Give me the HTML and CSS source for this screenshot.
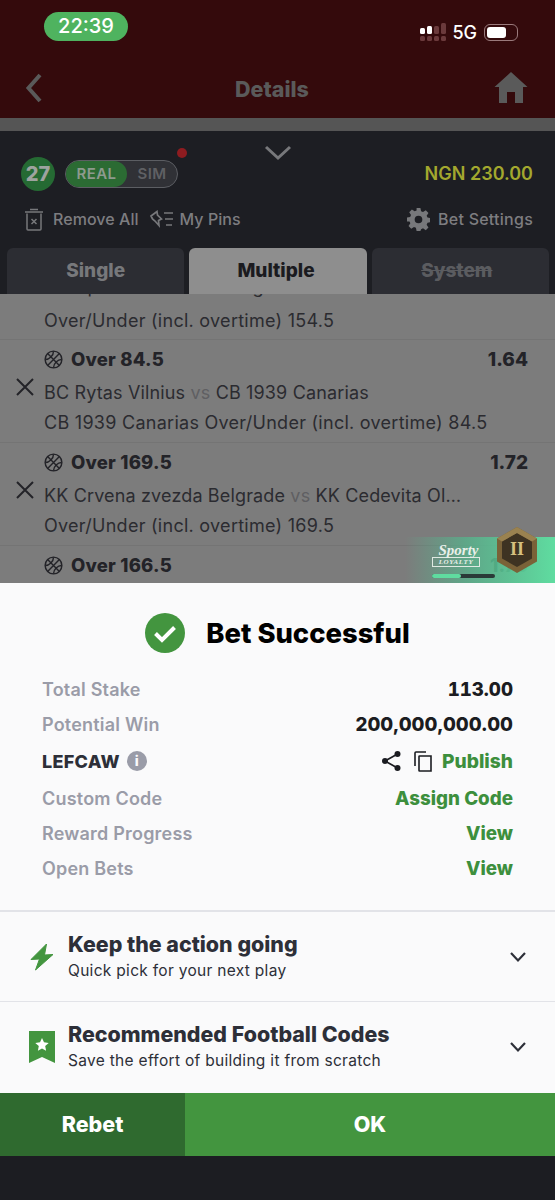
FILE: index.html
```html
<!DOCTYPE html>
<html lang="en">
<head>
<meta charset="utf-8">
<title>Bet Successful</title>
<link rel="stylesheet" href="styles.css">
</head>
<body>
<div class="app">
  <header class="top">
    <div class="status">
      <div class="time">22:39</div>
      <div class="status-right">
        <svg class="signal" width="27" height="20" viewBox="0 0 27 20">
          <g fill="#6b3a3c"><rect x="0" y="14" width="5" height="5" rx="1.5"/><rect x="7" y="14" width="5" height="5" rx="1.5"/><rect x="14" y="14" width="5" height="5" rx="1.5"/><rect x="21" y="14" width="5" height="5" rx="1.5"/><rect x="14" y="4" width="5" height="8" rx="1.5"/><rect x="21" y="1" width="5" height="11" rx="1.5"/></g>
          <g fill="#fff"><rect x="0" y="6" width="5" height="6" rx="1.5"/><rect x="7" y="4" width="5" height="8" rx="1.5"/></g>
        </svg>
        <span class="net">5G</span>
        <div class="battery"><div class="battery-fill"></div></div>
      </div>
    </div>
    <div class="nav">
      <svg class="back" width="18" height="32" viewBox="0 0 18 32"><path d="M15 3 3.500 16 15 29" fill="none" stroke="#5a5a5a" stroke-width="4"/></svg>
      <div class="nav-title">Details</div>
      <svg class="home" width="34" height="32" viewBox="0 0 34 32"><path d="M17 0 33.500 15H29V31H21V20H13V31H5V15H.5z" fill="#5a5a5a"/></svg>
    </div>
  </header>
  <div class="strip"></div>

  <section class="panel">
    <div class="grip"><svg width="28" height="16" viewBox="0 0 28 16"><path d="M2 2 14 13 26 2" fill="none" stroke="#77787b" stroke-width="3"/></svg></div>
    <div class="acct">
      <div class="count">27</div>
      <div class="toggle"><span class="real">REAL</span><span class="sim">SIM</span><i class="dot"></i></div>
      <div class="balance">NGN 230.00</div>
    </div>
    <div class="tools">
      <svg class="ti" width="18" height="23" viewBox="0 0 18 23"><path d="M2 5.500V21a1 1 0 0 0 1 1h12a1 1 0 0 0 1-1V5.500M0 4h18M5 1.500h8M6.500 11l5 5M11.500 11l-5 5" fill="none" stroke="#77787b" stroke-width="1.500"/></svg>
      <span class="tool-label">Remove All</span>
      <svg class="pin" width="24" height="18" viewBox="0 0 24 18"><path d="M1 6 7 1.500l.5 3.500 4 4-3 1.500.5 5L5 11 2.500 9zM14 3h9M15 9h8M16 15h6" fill="none" stroke="#77787b" stroke-width="1.700"/></svg>
      <span class="tool-label">My Pins</span>
      <svg class="gear" width="23" height="23" viewBox="0 0 24 24"><path fill="#77787b" fill-rule="evenodd" d="M10 0h4l.7 3.300 2 .9L19.600 2.300l2.800 2.800-1.900 2.900.9 2 3.300.7v4l-3.300.7-.9 2 1.900 2.900-2.800 2.800-2.900-1.900-2 .9L14 24h-4l-.7-3.300-2-.9-2.900 1.900-2.800-2.800 1.900-2.900-.9-2L0 14v-4l3.300-.7.9-2L2.300 4.400l2.800-2.800L8 3.500l2-.9zM12 8a4 4 0 1 0 0 8 4 4 0 0 0 0-8z"/></svg>
      <span class="tool-label tool-wide">Bet Settings</span>
    </div>
    <div class="tabs">
      <div class="tab">Single</div>
      <div class="tab tab-on">Multiple</div>
      <div class="tab tab-off">System</div>
    </div>
  </section>

  <section class="list">
    <article class="bet bet-cut">
      <div class="x-col"></div>
      <div class="bet-body">
        <div class="teams teams-cut">Ratiopharm Ulm <span class="vs">vs</span> Bourg</div>
        <div class="market">Over/Under (incl. overtime) 154.5</div>
      </div>
    </article>
    <article class="bet">
      <svg class="x" width="20" height="20" viewBox="0 0 20 20"><path d="M2 2 18 18M18 2 2 18" stroke="#232328" stroke-width="2"/></svg>
      <div class="bet-body">
        <div class="pick">
          <svg class="ball" width="19" height="19" viewBox="0 0 20 20"><g fill="none" stroke="#232328" stroke-width="1.500"><circle cx="10" cy="10" r="8.800"/><path d="M3.800 3.800 16.200 16.200M16.200 3.800 3.800 16.200M1.500 10c4 0 8.500-4 8.500-8.800M18.500 10c-4 0-8.500 4-8.500 8.800"/></g></svg>
          <span class="pick-name">Over 84.5</span><span class="odds">1.64</span>
        </div>
        <div class="teams">BC Rytas Vilnius <span class="vs">vs</span> CB 1939 Canarias</div>
        <div class="market">CB 1939 Canarias Over/Under (incl. overtime) 84.5</div>
      </div>
    </article>
    <article class="bet">
      <svg class="x" width="20" height="20" viewBox="0 0 20 20"><path d="M2 2 18 18M18 2 2 18" stroke="#232328" stroke-width="2"/></svg>
      <div class="bet-body">
        <div class="pick">
          <svg class="ball" width="19" height="19" viewBox="0 0 20 20"><g fill="none" stroke="#232328" stroke-width="1.500"><circle cx="10" cy="10" r="8.800"/><path d="M3.800 3.800 16.200 16.200M16.200 3.800 3.800 16.200M1.500 10c4 0 8.500-4 8.500-8.800M18.500 10c-4 0-8.500 4-8.500 8.800"/></g></svg>
          <span class="pick-name">Over 169.5</span><span class="odds">1.72</span>
        </div>
        <div class="teams">KK Crvena zvezda Belgrade <span class="vs">vs</span> KK Cedevita Ol…</div>
        <div class="market">Over/Under (incl. overtime) 169.5</div>
      </div>
    </article>
    <article class="bet bet-last">
      <div class="x-col"></div>
      <div class="bet-body">
        <div class="pick">
          <svg class="ball" width="19" height="19" viewBox="0 0 20 20"><g fill="none" stroke="#232328" stroke-width="1.500"><circle cx="10" cy="10" r="8.800"/><path d="M3.800 3.800 16.200 16.200M16.200 3.800 3.800 16.200M1.500 10c4 0 8.500-4 8.500-8.800M18.500 10c-4 0-8.500 4-8.500 8.800"/></g></svg>
          <span class="pick-name">Over 166.5</span><span class="odds">1.75</span>
        </div>
      </div>
    </article>
    <aside class="loyalty">
      <div class="loyalty-brand">
        <div class="sporty">Sporty</div>
        <div class="loyal-word">LOYALTY</div>
        <div class="progress"><div class="progress-fill"></div></div>
      </div>
      <svg class="hex" width="42" height="46" viewBox="0 0 42 46">
        <path d="M21 0 41 11.500v23L21 46 1 34.500v-23z" fill="#7a6238"/>
        <path d="M21 6 36 14.500v17L21 40 6 31.500v-17z" fill="#3e3322"/>
        <path d="M21 0 41 11.500 36 14.500 21 6 6 14.500 1 11.500z" fill="#9a8250"/>
      </svg>
      <span class="hex-label">II</span>
    </aside>
  </section>

  <section class="sheet">
    <div class="head">
      <svg width="40" height="40" viewBox="0 0 40 40"><circle cx="20" cy="20" r="20" fill="#43953f"/><path d="M10.500 20.500 17 27 29.500 14.500" fill="none" stroke="#fff" stroke-width="4"/></svg>
      <h1 class="head-title">Bet Successful</h1>
    </div>
    <div class="stats">
      <div class="stat"><span class="k">Total Stake</span><span class="v v-tab">113.00</span></div>
      <div class="stat"><span class="k">Potential Win</span><span class="v">200,000,000.00</span></div>
      <div class="stat stat-code">
        <span class="code">LEFCAW</span>
        <span class="info">i</span>
        <span class="code-actions">
          <svg width="19" height="20" viewBox="0 0 19 20"><g fill="#1b1c21"><circle cx="15.500" cy="3" r="3"/><circle cx="3" cy="10" r="3"/><circle cx="15.500" cy="17" r="3"/></g><path d="M15.500 3 3 10 15.500 17" fill="none" stroke="#1b1c21" stroke-width="1.700"/></svg>
          <svg class="copy" width="18" height="21" viewBox="0 0 18 21"><path d="M12 1H2a1 1 0 0 0-1 1v13M5.500 5H17v15H5.500a.5.500 0 0 1-.5-.5V5.500a.5.500 0 0 1 .5-.5z" fill="none" stroke="#1b1c21" stroke-width="1.600"/></svg>
          <span class="link link-pub">Publish</span>
        </span>
      </div>
      <div class="stat stat-custom"><span class="k">Custom Code</span><span class="link">Assign Code</span></div>
      <div class="stat"><span class="k">Reward Progress</span><span class="link">View</span></div>
      <div class="stat"><span class="k">Open Bets</span><span class="link">View</span></div>
    </div>
    <div class="fold fold-first">
      <svg class="fold-icon" width="26" height="28" viewBox="0 0 26 28"><path d="M17.500 1 2 16.500l8.500-.5L6.500 27 24 11.500l-8.500.5z" fill="#43953f" stroke="#43953f" stroke-width="1" stroke-linejoin="round"/></svg>
      <div class="fold-text"><div class="fold-title">Keep the action going</div><div class="fold-sub">Quick pick for your next play</div></div>
      <svg class="chev" width="18" height="12" viewBox="0 0 18 12"><path d="M2 2 9 9.500 16 2" fill="none" stroke="#2d2f38" stroke-width="2.200"/></svg>
    </div>
    <div class="fold">
      <svg class="fold-icon" width="26" height="32" viewBox="0 0 26 32"><path d="M0 0H26V32L13 26 0 32z" fill="#43953f"/><path d="m13 7 2 4.300 4.700.6-3.500 3.200.9 4.700-4.100-2.300-4.100 2.300.9-4.700-3.500-3.200 4.700-.6z" fill="#fff"/></svg>
      <div class="fold-text"><div class="fold-title">Recommended Football Codes</div><div class="fold-sub">Save the effort of building it from scratch</div></div>
      <svg class="chev" width="18" height="12" viewBox="0 0 18 12"><path d="M2 2 9 9.500 16 2" fill="none" stroke="#2d2f38" stroke-width="2.200"/></svg>
    </div>
  </section>

  <div class="actions">
    <div class="btn btn-rebet">Rebet</div>
    <div class="btn btn-ok">OK</div>
  </div>
</div>
</body>
</html>
```

FILE: styles.css
```css
* { box-sizing: border-box; }
html, body { margin: 0; padding: 0; }
body { background: #1c1d22; font-family: Inter, "Liberation Sans", sans-serif; }
.app { width: 555px; height: 1200px; overflow: hidden; display: flex; flex-direction: column; background: #1c1d22; }

.top { height: 118px; background: #340a0c; flex: none; }
.status { height: 59px; padding: 12px 37px 0 44px; display: flex; justify-content: space-between; }
.time { width: 84px; height: 29px; border-radius: 15px; background: #4fb35f; color: #fff; font-size: 20px; font-weight: 500; line-height: 29px; text-align: center; }
.status-right { display: flex; align-items: center; height: 40px; }
.signal { margin-right: 6px; }
.net { color: #fff; font-size: 18px; font-weight: 500; margin-right: 7px; margin-left: -1px; }
.battery { width: 34px; height: 17px; border: 1px solid #9a7a7c; border-radius: 6px; padding: 2px; }
.battery-fill { width: 19px; height: 100%; background: #fff; border-radius: 3px; }

.nav { height: 59px; display: flex; align-items: center; justify-content: space-between; padding: 0 27px 0 25px; }
.nav-title { flex: 1; text-align: center; color: #5a5a5a; font-size: 21.5px; font-weight: 800; padding-left: 7px; }
.back { margin-top: -1px; }
.home { margin-top: -1px; }

.strip { height: 13px; background: #555; flex: none; }

.panel { height: 163px; flex: none; background: #1d1e23; display: flex; flex-direction: column; }
.grip { height: 26px; padding-top: 14px; text-align: center; line-height: 0; }
.acct { height: 33px; display: flex; align-items: center; padding: 0 22px 0 21px; }
.count { width: 34px; height: 34px; border-radius: 50%; background: #256a33; color: #9ea39f; font-size: 20px; font-weight: 800; line-height: 34px; text-align: center; }
.toggle { position: relative; width: 113px; height: 28px; margin-left: 10px; border: 1px solid #5c5e63; border-radius: 14px; background: #303136; display: flex; font-size: 15px; font-weight: 600; letter-spacing: .4px; line-height: 26px; }
.real { width: 61px; background: #2b6b33; color: #8e9a8e; border-radius: 13px; text-align: center; }
.sim { flex: 1; color: #5f6064; text-align: center; }
.dot { position: absolute; top: -13px; right: -10px; width: 10px; height: 10px; border-radius: 50%; background: #8e1c20; }
.balance { margin-left: auto; color: #a3a82e; font-size: 18px; font-weight: 600; }

.tools { height: 46px; margin-top: 6px; display: flex; align-items: center; padding: 0 22px 0 25px; color: #7d7d80; font-size: 16px; font-weight: 500; letter-spacing: .05px; }
.tool-label { white-space: nowrap; }
.tool-wide { letter-spacing: .25px; }
.ti { margin-right: 10px; }
.pin { margin-left: 11px; margin-right: 6px; }
.gear { margin-left: auto; margin-right: 8px; }

.tabs { display: flex; gap: 5px; padding: 0 6px 0 7px; height: 46px; margin-top: 6px; }
.tab { flex: 1 1 0; background: #2c2d33; border-radius: 6px 6px 0 0; color: #77787b; font-size: 19px; font-weight: 800; line-height: 46px; text-align: center; }
.tab-on { background: #8e8e8e; color: #1b1b1f; text-indent: -4px; }
.tab-off { color: #5b5c60; text-decoration: line-through; text-indent: -7px; }

.list { position: relative; height: 289px; flex: none; background: #7c7c7c; overflow: hidden; }
.bet { display: flex; align-items: center; padding-right: 27px; height: 103px; border-bottom: 1px solid #747474; }
.bet-cut { height: 46px; align-items: flex-end; padding-bottom: 3px; overflow: hidden; }
.bet-last { border-bottom: 0; align-items: flex-start; padding-top: 8px; }
.x-col { width: 44px; flex: none; }
.x { margin: -8px 9px 0 15px; flex: none; }
.bet-body { flex: 1; min-width: 0; padding-top: 4px; }
.bet-last .bet-body { padding-top: 0; }
.pick { display: flex; align-items: center; height: 22px; margin-bottom: 8px; color: #232328; }
.ball { margin-right: 8px; }
.pick-name { font-size: 18.5px; font-weight: 800; letter-spacing: .2px; }
.odds { margin-left: auto; font-size: 19px; font-weight: 800; }
.teams { font-size: 18px; letter-spacing: .15px; line-height: 30px; color: #2b2b30; white-space: nowrap; }
.teams-cut { margin-bottom: 4px; }
.vs { color: #5f5f62; }
.market { font-size: 18px; letter-spacing: .27px; line-height: 30px; color: #2b2b30; white-space: nowrap; }

.loyalty { position: absolute; right: 0; bottom: 0; width: 150px; height: 46px; background: linear-gradient(90deg, rgba(95,200,150,0) 0%, rgba(85,180,140,.75) 40%, rgba(90,200,150,.9) 70%, #5fdca0 100%); }
.loyalty-brand { position: absolute; left: 27px; top: 8px; width: 63px; }
.sporty { color: #e8efe9; font-family: "Liberation Serif", serif; font-size: 15px; font-weight: 700; font-style: italic; line-height: 11px; text-align: center; padding-right: 10px; }
.loyal-word { width: 48px; border: 1px solid #dfe9e2; color: #e8efe9; font-family: "Liberation Serif", serif; font-size: 7px; font-weight: 700; font-style: italic; line-height: 8px; letter-spacing: .6px; text-align: center; margin-top: 1px; }
.progress { width: 63px; height: 4px; margin-top: 7px; background: #2a3a38; border-radius: 2px; }
.progress-fill { width: 29px; height: 100%; background: #5fdca0; border-radius: 2px; }
.hex { position: absolute; right: 17px; top: -10px; }
.hex-label { position: absolute; right: 28px; top: 1px; width: 20px; color: #d6c07f; font-family: "Liberation Serif", serif; font-size: 18px; font-weight: 700; line-height: 22px; text-align: center; }

.sheet { height: 510px; flex: none; background: #fafafb; display: flex; flex-direction: column; }
.head { height: 89px; padding-top: 10px; display: flex; align-items: center; justify-content: center; gap: 21px; }
.head-title { margin: 0; color: #000; font-size: 27.4px; font-weight: 800; }
.stats { height: 238px; padding: 0 42px; }
.stat { height: 35px; display: flex; align-items: center; justify-content: space-between; font-size: 18px; }
.stat-code { height: 38px; }
.stat-custom { height: 36px; }
.k { color: #9a9ca8; font-weight: 600; letter-spacing: .2px; }
.v { color: #1b1c21; font-size: 18.7px; font-weight: 800; }
.v-tab { font-variant-numeric: tabular-nums; }
.link { color: #3d8f3d; font-size: 18.8px; font-weight: 800; }
.link-pub { font-size: 19.2px; }
.code { color: #2d2f38; font-weight: 800; letter-spacing: .3px; }
.info { width: 20px; height: 20px; margin: 0 auto 0 7px; border-radius: 50%; background: #9a9ca8; color: #fafafb; font-size: 14px; font-weight: 800; line-height: 20px; text-align: center; }
.code-actions { display: flex; align-items: center; }
.copy { margin: 0 10px 0 13px; }

.fold { height: 91px; flex: none; border-top: 1px solid #e2e3e8; display: flex; align-items: center; padding: 0 28px 0 29px; }
.fold-first { border-top-width: 2px; }
.fold-icon { flex: none; }
.fold-text { flex: 1; margin-left: 13px; }
.fold-title { color: #2d2f38; font-size: 21.4px; font-weight: 800; line-height: 28px; white-space: nowrap; }
.fold-sub { color: #2d2f38; font-size: 15.5px; font-weight: 400; line-height: 26px; letter-spacing: .3px; }

.actions { height: 63px; flex: none; display: flex; }
.btn { color: #fff; font-size: 21.5px; font-weight: 800; line-height: 62px; text-align: center; }
.btn-rebet { width: 185px; background: #2f6a2f; }
.btn-ok { flex: 1; background: #43953f; }
```
